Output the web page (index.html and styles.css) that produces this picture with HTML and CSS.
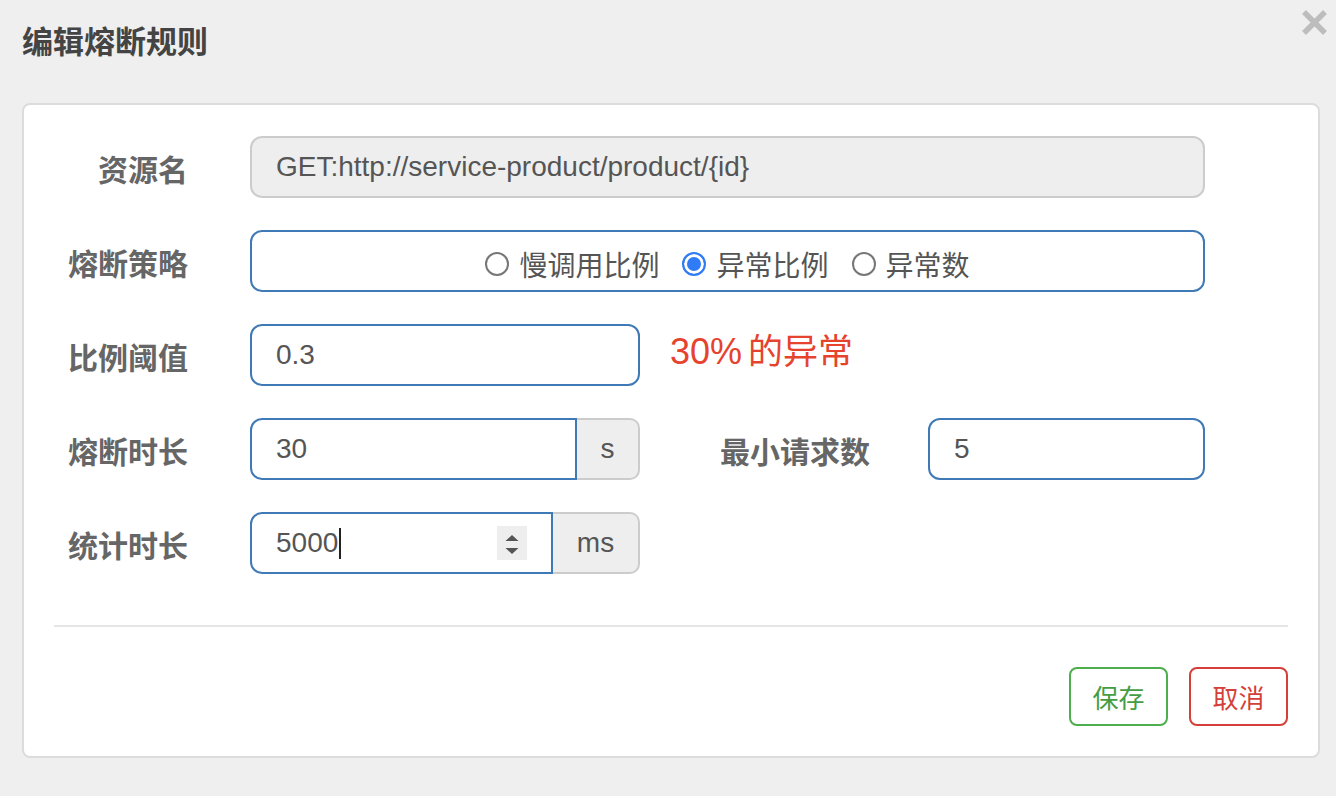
FILE: index.html
```html
<!DOCTYPE html>
<html lang="zh-CN">
<head>
  <meta charset="UTF-8" />
  <meta name="viewport" content="width=device-width, initial-scale=1.0"/>
  <title>编辑熔断规则</title>
  <link rel="stylesheet" href="styles.css">
</head>
<body>
  <div class="modal-header">
    <h4 class="modal-title">编辑熔断规则</h4>
    <button class="close" type="button" aria-label="Close">
      <svg width="27" height="27" viewBox="0 0 27 27">
        <path d="M3 3 L24 24 M24 3 L3 24" stroke="#bdbdbd" stroke-width="5.5" fill="none"/>
      </svg>
    </button>
  </div>

  <div class="card">
    <div class="form-row">
      <label class="form-label">资源名</label>
      <div class="form-control disabled wide">GET:http://service-product/product/{id}</div>
    </div>

    <div class="form-row">
      <label class="form-label">熔断策略</label>
      <div class="form-control wide radio-group">
        <label class="radio"><span class="radio-dot"></span>慢调用比例</label>
        <label class="radio"><span class="radio-dot checked"></span>异常比例</label>
        <label class="radio"><span class="radio-dot"></span>异常数</label>
      </div>
    </div>

    <div class="form-row">
      <label class="form-label">比例阈值</label>
      <div class="form-control narrow">0.3</div>
      <span class="hint"><span class="hint-num">30%</span>的异常</span>
    </div>

    <div class="form-row">
      <label class="form-label">熔断时长</label>
      <div class="input-group">
        <div class="form-control">30</div>
        <span class="addon">s</span>
      </div>
      <label class="form-label inline-label">最小请求数</label>
      <div class="form-control min-req">5</div>
    </div>

    <div class="form-row">
      <label class="form-label">统计时长</label>
      <div class="input-group">
        <div class="form-control">
          <span>5000</span><span class="caret"></span>
          <svg class="spinner" width="30" height="34" viewBox="0 0 30 34">
            <rect width="30" height="34" fill="#eeeeee"/>
            <polygon points="8.5,15 15,9 21.5,15" fill="#555"/>
            <polygon points="8.5,22 21.5,22 15,28" fill="#555"/>
          </svg>
        </div>
        <span class="addon addon-ms">ms</span>
      </div>
    </div>

    <hr class="divider">

    <div class="btn-row">
      <button type="button" class="btn btn-save">保存</button>
      <button type="button" class="btn btn-cancel">取消</button>
    </div>
  </div>
</body>
</html>
```

FILE: styles.css
```css
* {
  box-sizing: border-box;
}
body {
  margin: 0;
  background-color: #efefef;
  font-family: "Liberation Sans", "Noto Sans CJK SC", sans-serif;
  color: #555;
}
.modal-header {
  display: flex;
  justify-content: space-between;
  align-items: flex-start;
  padding: 9px 8px 0 22px;
}
.modal-title {
  margin: 11px 0 0;
  font-family: "Noto Sans CJK SC", sans-serif;
  font-size: 31px;
  line-height: 40px;
  font-weight: bold;
  color: #444;
}
.close {
  border: none;
  background: none;
  padding: 0;
  width: 27px;
  height: 27px;
  cursor: pointer;
}
.card {
  margin: 43px 16px 0 22px;
  background: #fff;
  border: 2px solid #dcdcdc;
  border-radius: 8px;
  padding: 31px 30px 30px;
}
.form-row {
  display: flex;
  align-items: center;
  height: 62px;
  margin-bottom: 32px;
}
.form-label {
  width: 134px;
  margin-right: 62px;
  padding-top: 1px;
  text-align: right;
  white-space: nowrap;
  font-family: "Noto Sans CJK SC", sans-serif;
  font-size: 30px;
  font-weight: bold;
  color: #666;
}
.inline-label {
  width: 230px;
  margin-right: 58px;
}
.form-control {
  display: flex;
  align-items: center;
  height: 62px;
  padding: 0 24px;
  border: 2px solid #3f7ab7;
  border-radius: 12px;
  background: #fff;
  font-size: 28px;
  color: #555;
  white-space: nowrap;
}
.wide {
  width: 955px;
}
.narrow {
  width: 390px;
}
.min-req {
  width: 277px;
}
.disabled {
  background: #eee;
  border-color: #ccc;
}
.radio-group {
  justify-content: center;
  padding-top: 6px;
}
.radio {
  display: flex;
  align-items: center;
  margin-right: 23px;
  font-family: "Noto Sans CJK SC", sans-serif;
  font-size: 28px;
  color: #555;
}
.radio:last-child {
  margin-right: 0;
}
.radio-dot {
  width: 24px;
  height: 24px;
  margin-right: 10px;
  border: 2px solid #777;
  border-radius: 50%;
  background: #fff;
}
.radio-dot.checked {
  border-color: #2f7cf6;
  background: #2f7cf6;
  box-shadow: inset 0 0 0 3px #fff;
}
.hint {
  margin-left: 30px;
  padding-bottom: 14px;
  font-size: 35px;
  color: #e6432e;
}
.hint-num {
  font-size: 36px;
  margin-right: 6px;
}
.input-group {
  display: flex;
  width: 390px;
}
.input-group .form-control {
  flex: 1;
  border-radius: 12px 0 0 12px;
}
.addon {
  display: flex;
  align-items: center;
  justify-content: center;
  width: 63px;
  height: 62px;
  border: 2px solid #ccc;
  border-left: none;
  border-radius: 0 10px 10px 0;
  background: #eee;
  font-size: 28px;
  color: #555;
}
.addon-ms {
  width: 87px;
}
.caret {
  width: 2px;
  height: 31px;
  margin-left: 1px;
  background: #222;
}
.spinner {
  margin-left: auto;
}
.divider {
  border: none;
  border-top: 2px solid #e5e5e5;
  margin: 51px 0 40px;
}
.btn-row {
  display: flex;
  justify-content: flex-end;
  gap: 21px;
}
.btn {
  width: 99px;
  height: 59px;
  border: 2px solid;
  border-radius: 8px;
  background: #fff;
  font-family: "Noto Sans CJK SC", sans-serif;
  font-size: 26px;
  cursor: pointer;
}
.btn-save {
  border-color: #4cae4c;
  color: #449d44;
}
.btn-cancel {
  border-color: #d43f3a;
  color: #d43f3a;
}
```
